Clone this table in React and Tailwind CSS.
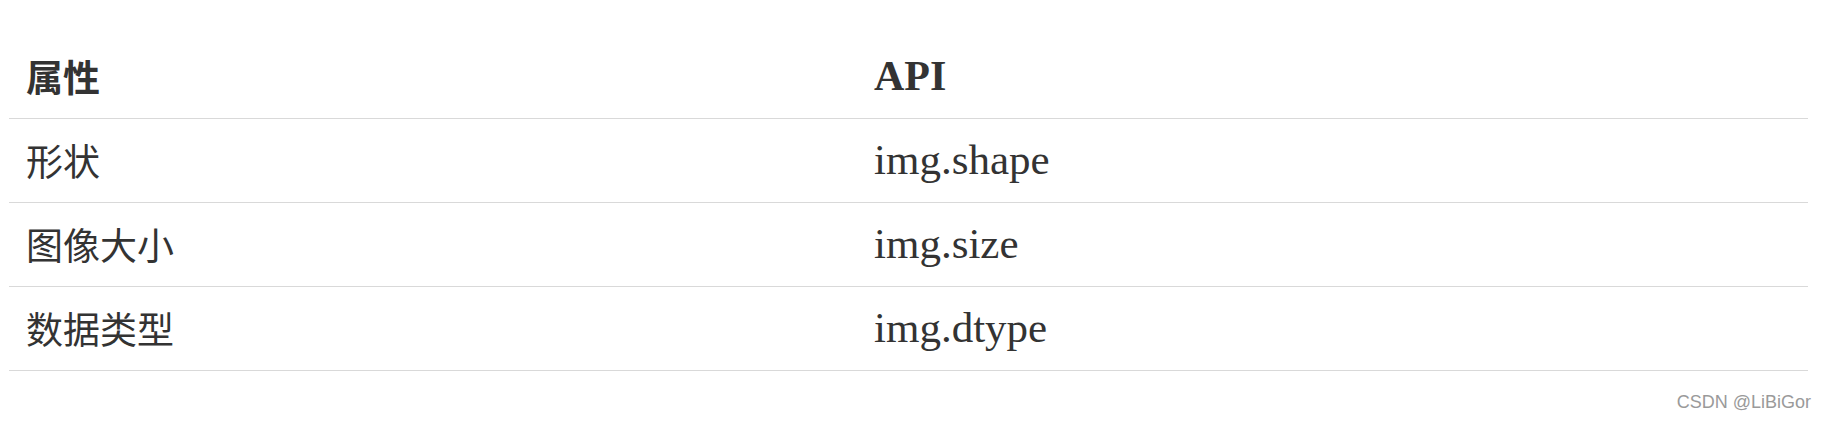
import React from 'react';

const rows = [
    { name: '形状', api: 'img.shape' },
    { name: '图像大小', api: 'img.size' },
    { name: '数据类型', api: 'img.dtype' },
];

const App = () => {
    return (
        <div className="w-[1826px] h-[422px] bg-white text-[#333333] overflow-hidden">
            {/* table */}
            <div className="pt-[35px] pl-[9px] pr-[18px]">
                <div className="flex h-[84px] items-center border-b border-[#d9d9d9]">
                    <div className="w-[847px] pl-[17px] text-[37px] font-bold [font-family:'Noto_Sans_CJK_SC',sans-serif]">
                        属性
                    </div>
                    <div className="flex-1 pl-[18px] text-[42px] font-bold [font-family:'Liberation_Serif',serif]">
                        API
                    </div>
                </div>
                {rows.map((row, i) => (
                    <div key={i} className="flex h-[84px] items-center border-b border-[#d9d9d9]">
                        <div className="w-[847px] pl-[17px] text-[37px] [font-family:'Noto_Sans_CJK_SC',sans-serif]">
                            {row.name}
                        </div>
                        <div className="flex-1 pl-[18px] text-[43px] [font-family:'Liberation_Serif',serif]">
                            {row.api}
                        </div>
                    </div>
                ))}
            </div>

            {/* watermark */}
            <div className="flex justify-end pr-[15px] mt-[21px]">
                <span className="text-[18px] leading-[20px] text-[#9a9a9a] [font-family:'Liberation_Sans',sans-serif] [text-shadow:1px_1px_1px_#ffffff]">
                    CSDN @LiBiGor
                </span>
            </div>
        </div>
    );
};

export default App;
